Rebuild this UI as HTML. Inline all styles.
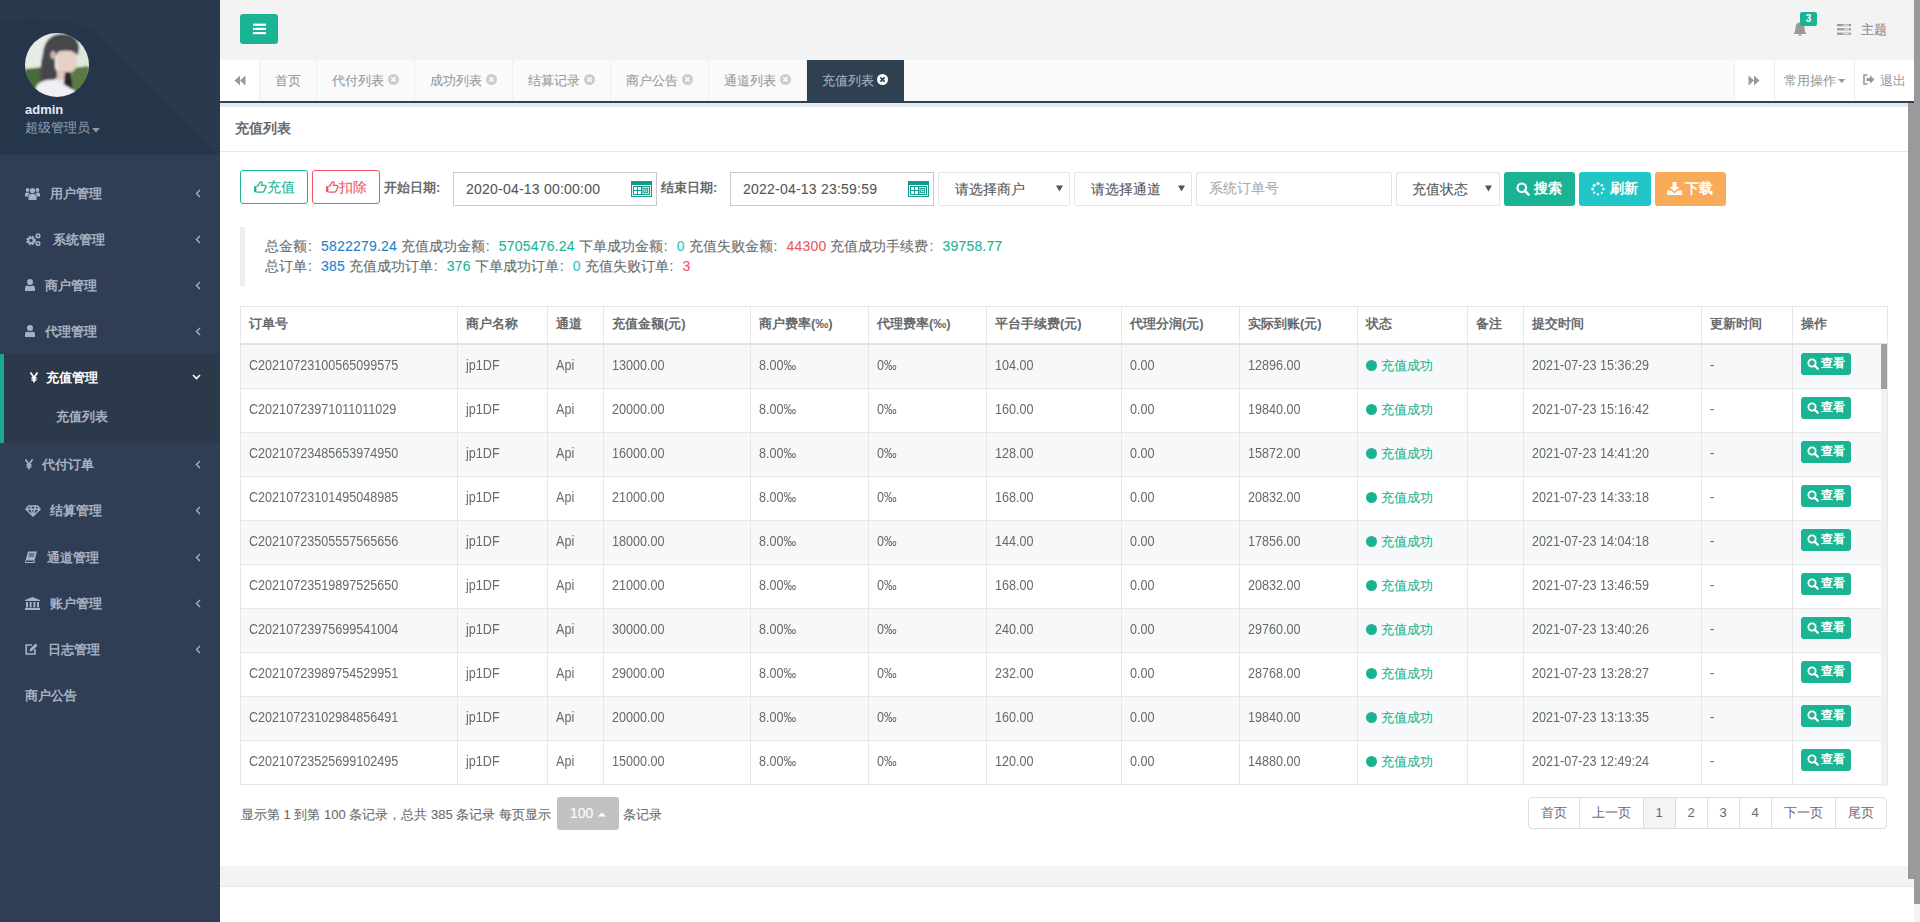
<!DOCTYPE html><html><head><meta charset="utf-8"><style>*{box-sizing:border-box}
html,body{margin:0;padding:0;width:1920px;height:922px;overflow:hidden;background:#f3f3f4;font-family:"Liberation Sans",sans-serif;color:#676a6c;font-size:13px}
.abs{position:absolute}
svg{display:block}
.t{position:absolute;white-space:nowrap;-webkit-text-stroke:0.08px currentColor}
.t[style*="bold"]{-webkit-text-stroke:0}
.num{display:inline-block;transform:scaleX(.9);transform-origin:0 0;-webkit-text-stroke:0}
</style></head><body>
<div class="abs" style="left:0;top:0;width:220px;height:922px;background:#303e55"></div>
<svg class="abs" style="left:0;top:0" width="220" height="155" viewBox="0 0 220 155"><rect width="220" height="155" fill="#2a3a4d"/><path d="M0 22 Q60 14 96 32 L220 158 L0 158Z" fill="#25354a"/></svg>
<svg class="abs" style="left:25px;top:33px" width="64" height="64" viewBox="0 0 64 64">
<defs><clipPath id="cc"><circle cx="32" cy="32" r="32"/></clipPath><filter id="bl" x="-10%" y="-10%" width="120%" height="120%"><feGaussianBlur stdDeviation="0.9"/></filter></defs>
<g clip-path="url(#cc)"><g filter="url(#bl)">
<rect x="-4" y="-4" width="72" height="72" fill="#e8ece6"/>
<path d="M0 36 L18 34 L18 56 L0 56Z" fill="#4a6a3a"/>
<path d="M46 34 L64 32 L64 60 L48 60Z" fill="#587a44"/>
<path d="M50 6 L64 10 L64 33 L48 35Z" fill="#dfe7dc"/>
<path d="M18 20 Q20 2 36 1 Q52 0 54 14 L53 22 L46 18 Q40 17 33 19 L30 24 L30 34 L34 44 L26 48 L16 50 Q14 36 18 20Z" fill="#47464c"/>
<path d="M33 19 Q42 16 50 20 L52 27 L51 35 Q48 40 42 40 L34 38 Q30 30 33 19Z" fill="#e6d0c5"/>
<ellipse cx="28" cy="22" rx="2.5" ry="4" fill="#cdb7ae"/>
<rect x="32" y="37" width="8" height="10" fill="#dfc8bd"/>
<path d="M40 39 L46 39 L48 56 L38 58Z" fill="#2b2729"/>
<path d="M8 66 L12 52 Q18 46 30 47 L40 52 L50 58 L52 66Z" fill="#eef0f3"/>
</g></g></svg>
<div class="t" style="left:25px;top:102px;color:#e6ebf2;font-weight:bold;font-size:13px;line-height:16px">admin</div>
<div class="t" style="left:25px;top:120px;color:#8a9bb0;font-size:13px;line-height:16px">超级管理员</div>
<svg class="abs" style="left:92px;top:128px" width="8" height="5"><path d="M0 0H8L4 4.5Z" fill="#8a9bb0"/></svg>
<div class="abs" style="left:0;top:354px;width:220px;height:89px;background:#2b394a;border-left:4px solid #19aa8d"></div>
<div class="abs" style="left:24.7px;top:186.9px"><svg width="15" height="13" viewBox="0 0 15 13"><circle cx="7.5" cy="3.6" r="2.6" fill="#a7b1c2"/><circle cx="2.6" cy="3" r="1.9" fill="#a7b1c2"/><circle cx="12.4" cy="3" r="1.9" fill="#a7b1c2"/><path d="M3.5 13 V9.5 Q3.5 6.8 7.5 6.8 Q11.5 6.8 11.5 9.5 V13Z" fill="#a7b1c2"/><path d="M0 9.5 V7 Q0 5.6 2.6 5.6 Q4 5.6 4.6 6.2 Q3 7.4 3 9.5Z" fill="#a7b1c2"/><path d="M15 9.5 V7 Q15 5.6 12.4 5.6 Q11 5.6 10.4 6.2 Q12 7.4 12 9.5Z" fill="#a7b1c2"/></svg></div>
<div class="t" style="left:49.5px;top:185.9px;line-height:16px;font-size:13px;font-weight:bold;color:#a7b1c2">用户管理</div>
<svg class="abs" style="left:195px;top:188.9px" width="6" height="9" viewBox="0 0 6 9"><path d="M5 1 L1.5 4.5 L5 8" stroke="#a7b1c2" stroke-width="1.4" fill="none"/></svg>
<div class="abs" style="left:26.0px;top:232.7px"><svg width="15" height="13" viewBox="0 0 15 13"><circle cx="5" cy="7.5" r="3.6" fill="none" stroke="#a7b1c2" stroke-width="2.4" stroke-dasharray="1.9 1"/><circle cx="5" cy="7.5" r="2.6" fill="none" stroke="#a7b1c2" stroke-width="1.8"/><circle cx="12" cy="2.8" r="1.8" fill="none" stroke="#a7b1c2" stroke-width="1.6"/><circle cx="12" cy="10.5" r="1.8" fill="none" stroke="#a7b1c2" stroke-width="1.6"/></svg></div>
<div class="t" style="left:52.5px;top:231.7px;line-height:16px;font-size:13px;font-weight:bold;color:#a7b1c2">系统管理</div>
<svg class="abs" style="left:195px;top:234.7px" width="6" height="9" viewBox="0 0 6 9"><path d="M5 1 L1.5 4.5 L5 8" stroke="#a7b1c2" stroke-width="1.4" fill="none"/></svg>
<div class="abs" style="left:25.0px;top:279.0px"><svg width="10" height="12" viewBox="0 0 10 12"><circle cx="5" cy="3" r="3" fill="#a7b1c2"/><path d="M0 12 V9.2 Q0 6.6 2.4 6.4 Q5 8 7.6 6.4 Q10 6.6 10 9.2 V12Z" fill="#a7b1c2"/></svg></div>
<div class="t" style="left:45.0px;top:277.5px;line-height:16px;font-size:13px;font-weight:bold;color:#a7b1c2">商户管理</div>
<svg class="abs" style="left:195px;top:280.5px" width="6" height="9" viewBox="0 0 6 9"><path d="M5 1 L1.5 4.5 L5 8" stroke="#a7b1c2" stroke-width="1.4" fill="none"/></svg>
<div class="abs" style="left:25.0px;top:325.0px"><svg width="10" height="12" viewBox="0 0 10 12"><circle cx="5" cy="3" r="3" fill="#a7b1c2"/><path d="M0 12 V9.2 Q0 6.6 2.4 6.4 Q5 8 7.6 6.4 Q10 6.6 10 9.2 V12Z" fill="#a7b1c2"/></svg></div>
<div class="t" style="left:45.0px;top:323.5px;line-height:16px;font-size:13px;font-weight:bold;color:#a7b1c2">代理管理</div>
<svg class="abs" style="left:195px;top:326.5px" width="6" height="9" viewBox="0 0 6 9"><path d="M5 1 L1.5 4.5 L5 8" stroke="#a7b1c2" stroke-width="1.4" fill="none"/></svg>
<div class="abs" style="left:29.5px;top:371.5px"><svg width="8" height="11" viewBox="0 0 8 11"><path d="M0.5 0.5 L4 5.5 L7.5 0.5 M4 5.5 V10.5 M1.5 5.8 H6.5 M1.5 8 H6.5" stroke="#fff" stroke-width="1.7" fill="none"/></svg></div>
<div class="t" style="left:46.0px;top:369.5px;line-height:16px;font-size:13px;font-weight:bold;color:#fff">充值管理</div>
<svg class="abs" style="left:192px;top:374.0px" width="9" height="6" viewBox="0 0 9 6"><path d="M1 1 L4.5 4.5 L8 1" stroke="#fff" stroke-width="1.6" fill="none"/></svg>
<div class="abs" style="left:25.0px;top:459.1px"><svg width="8" height="11" viewBox="0 0 8 11"><path d="M0.5 0.5 L4 5.5 L7.5 0.5 M4 5.5 V10.5 M1.5 5.8 H6.5 M1.5 8 H6.5" stroke="#a7b1c2" stroke-width="1.7" fill="none"/></svg></div>
<div class="t" style="left:42.0px;top:457.1px;line-height:16px;font-size:13px;font-weight:bold;color:#a7b1c2">代付订单</div>
<svg class="abs" style="left:195px;top:460.1px" width="6" height="9" viewBox="0 0 6 9"><path d="M5 1 L1.5 4.5 L5 8" stroke="#a7b1c2" stroke-width="1.4" fill="none"/></svg>
<div class="abs" style="left:24.6px;top:504.6px"><svg width="16" height="12" viewBox="0 0 16 12"><path d="M3.5 1 H12.5 L15 4.2 L8 11 L1 4.2Z M1 4.2 H15 M5.5 1 L6.2 4.2 L8 11 L9.8 4.2 L10.5 1" stroke="#a7b1c2" stroke-width="1.5" fill="none" stroke-linejoin="round"/></svg></div>
<div class="t" style="left:50.0px;top:503.1px;line-height:16px;font-size:13px;font-weight:bold;color:#a7b1c2">结算管理</div>
<svg class="abs" style="left:195px;top:506.1px" width="6" height="9" viewBox="0 0 6 9"><path d="M5 1 L1.5 4.5 L5 8" stroke="#a7b1c2" stroke-width="1.4" fill="none"/></svg>
<div class="abs" style="left:25.0px;top:551.0px"><svg width="12" height="12" viewBox="0 0 12 12"><path d="M3 0.5 H12 L9.5 9.5 H0.5Z" fill="#a7b1c2"/><path d="M0.5 9.5 L0 11.5 H9 L9.5 9.5" stroke="#a7b1c2" stroke-width="1.2" fill="none"/><path d="M4 3 H9.5 M3.5 5 H9" stroke="#303e55" stroke-width="1"/></svg></div>
<div class="t" style="left:46.5px;top:549.5px;line-height:16px;font-size:13px;font-weight:bold;color:#a7b1c2">通道管理</div>
<svg class="abs" style="left:195px;top:552.5px" width="6" height="9" viewBox="0 0 6 9"><path d="M5 1 L1.5 4.5 L5 8" stroke="#a7b1c2" stroke-width="1.4" fill="none"/></svg>
<div class="abs" style="left:24.6px;top:597.1px"><svg width="15" height="13" viewBox="0 0 15 13"><path d="M7.5 0 L15 3 V4 H0 V3Z" fill="#a7b1c2"/><rect x="1" y="5" width="2" height="5.5" fill="#a7b1c2"/><rect x="4.6" y="5" width="2" height="5.5" fill="#a7b1c2"/><rect x="8.4" y="5" width="2" height="5.5" fill="#a7b1c2"/><rect x="12" y="5" width="2" height="5.5" fill="#a7b1c2"/><rect x="0" y="11" width="15" height="2" fill="#a7b1c2"/></svg></div>
<div class="t" style="left:50.0px;top:596.1px;line-height:16px;font-size:13px;font-weight:bold;color:#a7b1c2">账户管理</div>
<svg class="abs" style="left:195px;top:599.1px" width="6" height="9" viewBox="0 0 6 9"><path d="M5 1 L1.5 4.5 L5 8" stroke="#a7b1c2" stroke-width="1.4" fill="none"/></svg>
<div class="abs" style="left:25.0px;top:643.0px"><svg width="13" height="12" viewBox="0 0 13 12"><path d="M7 2 H1.2 V11 H10 V6" stroke="#a7b1c2" stroke-width="1.6" fill="none"/><path d="M4.5 8.5 L5 6 L10.5 0.5 L12.5 2.5 L7 8Z" fill="#a7b1c2"/></svg></div>
<div class="t" style="left:48.0px;top:641.5px;line-height:16px;font-size:13px;font-weight:bold;color:#a7b1c2">日志管理</div>
<svg class="abs" style="left:195px;top:644.5px" width="6" height="9" viewBox="0 0 6 9"><path d="M5 1 L1.5 4.5 L5 8" stroke="#a7b1c2" stroke-width="1.4" fill="none"/></svg>
<div class="t" style="left:25.0px;top:687.5px;line-height:16px;font-size:13px;font-weight:bold;color:#a7b1c2">商户公告</div>
<div class="t" style="left:56px;top:409px;line-height:16px;font-size:13px;font-weight:bold;color:#a7b1c2">充值列表</div>
<div class="abs" style="left:220px;top:0;width:1694px;height:60px;background:#f3f3f4"></div>
<div class="abs" style="left:240px;top:14px;width:38px;height:30px;background:#1ab394;border-radius:3px"></div>
<svg class="abs" style="left:253px;top:23px" width="13" height="12" viewBox="0 0 13 12"><rect x="0" y="0.6" width="13" height="2.2" fill="#fff"/><rect x="0" y="4.8" width="13" height="2.2" fill="#fff"/><rect x="0" y="9" width="13" height="2.2" fill="#fff"/></svg>
<svg class="abs" style="left:1793px;top:22px" width="14" height="15" viewBox="0 0 14 15"><path d="M7 0.5 Q11.5 0.5 11.5 6 Q11.5 10 13.5 12 H0.5 Q2.5 10 2.5 6 Q2.5 0.5 7 0.5Z" fill="#999"/><path d="M5 12.5 Q7 15.5 9 12.5Z" fill="#999"/></svg>
<div class="abs" style="left:1800px;top:12px;width:17px;height:14px;background:#1ab394;border-radius:2px;color:#fff;font-size:10px;font-weight:bold;line-height:14px;text-align:center">3</div>
<svg class="abs" style="left:1837px;top:24px" width="14" height="11" viewBox="0 0 14 11"><rect x="0" y="0" width="14" height="2.2" fill="#999"/><rect x="0" y="4.2" width="14" height="2.2" fill="#999"/><rect x="0" y="8.6" width="14" height="2.2" fill="#999"/><rect x="6" y="0.6" width="6" height="1" fill="#f3f3f4"/><rect x="7" y="4.8" width="5" height="1" fill="#f3f3f4"/><rect x="6" y="9.2" width="6" height="1" fill="#f3f3f4"/></svg>
<div class="t" style="left:1861px;top:22px;font-size:13px;line-height:16px;color:#888">主题</div>
<div class="abs" style="left:220px;top:60px;width:1694px;height:43px;background:#fafafa;border-bottom:2px solid #2f4050"></div>
<div class="abs" style="left:220px;top:60px;width:40px;height:41px;background:#fff;border-right:1px solid #eee"></div>
<svg class="abs" style="left:234px;top:75px" width="12" height="11" viewBox="0 0 12 11"><path d="M6 0.5 L0.5 5.5 L6 10.5Z M11.5 0.5 L6 5.5 L11.5 10.5Z" fill="#999"/></svg>
<div class="abs" style="left:260px;top:60px;width:57px;height:41px;border-right:1px solid #eee;"></div>
<div class="t" style="left:275px;top:60px;line-height:41px;font-size:13px;color:#999">首页</div>
<div class="abs" style="left:317px;top:60px;width:98px;height:41px;border-right:1px solid #eee;"></div>
<div class="t" style="left:332px;top:60px;line-height:41px;font-size:13px;color:#999">代付列表</div>
<svg class="abs" style="left:388px;top:74px" width="11" height="11" viewBox="0 0 11 11"><circle cx="5.5" cy="5.5" r="5.5" fill="#ccc"/><path d="M3.4 3.4 L7.6 7.6 M7.6 3.4 L3.4 7.6" stroke="#fafafa" stroke-width="1.6"/></svg>
<div class="abs" style="left:415px;top:60px;width:98px;height:41px;border-right:1px solid #eee;"></div>
<div class="t" style="left:430px;top:60px;line-height:41px;font-size:13px;color:#999">成功列表</div>
<svg class="abs" style="left:486px;top:74px" width="11" height="11" viewBox="0 0 11 11"><circle cx="5.5" cy="5.5" r="5.5" fill="#ccc"/><path d="M3.4 3.4 L7.6 7.6 M7.6 3.4 L3.4 7.6" stroke="#fafafa" stroke-width="1.6"/></svg>
<div class="abs" style="left:513px;top:60px;width:98px;height:41px;border-right:1px solid #eee;"></div>
<div class="t" style="left:528px;top:60px;line-height:41px;font-size:13px;color:#999">结算记录</div>
<svg class="abs" style="left:584px;top:74px" width="11" height="11" viewBox="0 0 11 11"><circle cx="5.5" cy="5.5" r="5.5" fill="#ccc"/><path d="M3.4 3.4 L7.6 7.6 M7.6 3.4 L3.4 7.6" stroke="#fafafa" stroke-width="1.6"/></svg>
<div class="abs" style="left:611px;top:60px;width:98px;height:41px;border-right:1px solid #eee;"></div>
<div class="t" style="left:626px;top:60px;line-height:41px;font-size:13px;color:#999">商户公告</div>
<svg class="abs" style="left:682px;top:74px" width="11" height="11" viewBox="0 0 11 11"><circle cx="5.5" cy="5.5" r="5.5" fill="#ccc"/><path d="M3.4 3.4 L7.6 7.6 M7.6 3.4 L3.4 7.6" stroke="#fafafa" stroke-width="1.6"/></svg>
<div class="abs" style="left:709px;top:60px;width:98px;height:41px;border-right:1px solid #eee;"></div>
<div class="t" style="left:724px;top:60px;line-height:41px;font-size:13px;color:#999">通道列表</div>
<svg class="abs" style="left:780px;top:74px" width="11" height="11" viewBox="0 0 11 11"><circle cx="5.5" cy="5.5" r="5.5" fill="#ccc"/><path d="M3.4 3.4 L7.6 7.6 M7.6 3.4 L3.4 7.6" stroke="#fafafa" stroke-width="1.6"/></svg>
<div class="abs" style="left:807px;top:60px;width:97px;height:41px;border-right:1px solid #eee;background:#2f4050;border-right:none;"></div>
<div class="t" style="left:822px;top:60px;line-height:41px;font-size:13px;color:#a7b1c2">充值列表</div>
<svg class="abs" style="left:877px;top:74px" width="11" height="11" viewBox="0 0 11 11"><circle cx="5.5" cy="5.5" r="5.5" fill="#fff"/><path d="M3.4 3.4 L7.6 7.6 M7.6 3.4 L3.4 7.6" stroke="#2f4050" stroke-width="1.6"/></svg>
<div class="abs" style="left:1734px;top:60px;width:180px;height:41px;background:#fff;border-left:1px solid #eee"></div>
<div class="abs" style="left:1774px;top:60px;width:1px;height:41px;background:#eee"></div>
<div class="abs" style="left:1854px;top:60px;width:1px;height:41px;background:#eee"></div>
<svg class="abs" style="left:1748px;top:75px" width="12" height="11" viewBox="0 0 12 11"><path d="M0.5 0.5 L6 5.5 L0.5 10.5Z M6 0.5 L11.5 5.5 L6 10.5Z" fill="#999"/></svg>
<div class="t" style="left:1784px;top:60px;line-height:41px;font-size:13px;color:#999">常用操作</div>
<svg class="abs" style="left:1838px;top:79px" width="8" height="5"><path d="M0 0H7.5L3.75 4Z" fill="#999"/></svg>
<svg class="abs" style="left:1863px;top:74px" width="12" height="11" viewBox="0 0 12 11"><path d="M4.5 1 H1 V10 H4.5" stroke="#999" stroke-width="1.6" fill="none"/><path d="M3.5 4 H7 V1.2 L11.5 5.5 L7 9.8 V7 H3.5Z" fill="#999"/></svg>
<div class="t" style="left:1880px;top:60px;line-height:41px;font-size:13px;color:#999">退出</div>
<div class="abs" style="left:220px;top:103px;width:1688px;height:763px;background:#fff"></div>
<div class="abs" style="left:220px;top:103px;width:1688px;height:49px;border-top:4px solid #e7eaec;border-bottom:1px solid #e7eaec"></div>
<div class="t" style="left:235px;top:120px;font-size:14px;font-weight:bold;line-height:17px;color:#676a6c">充值列表</div>
<div class="abs" style="left:240px;top:170px;width:68px;height:34px;border:1px solid #1ab394;border-radius:3px;background:#fff"></div>
<div class="abs" style="left:253px;top:181px"><svg width="14" height="12" viewBox="0 0 14 12"><path d="M1 5.2 H3.4 V11.2 H1Z" fill="#1ab394"/><path d="M3.6 5.4 Q5.6 4.6 6.4 2.2 Q6.8 0.8 8 0.8 Q9.4 1 9 3 L8.6 4.4 H12 Q13.2 4.6 13 5.8 Q12.8 6.6 12 6.8 Q12.6 7.6 11.8 8.4 Q12 9.4 11 9.8 Q11 11 9.6 11.2 H5 Q4 11.2 3.6 10.6" stroke="#1ab394" stroke-width="1.3" fill="none" stroke-linejoin="round"/></svg></div>
<div class="t" style="left:267px;top:179px;font-size:14px;line-height:17px;color:#1ab394">充值</div>
<div class="abs" style="left:312px;top:170px;width:68px;height:34px;border:1px solid #ed5565;border-radius:3px;background:#fff"></div>
<div class="abs" style="left:325px;top:181px"><svg width="14" height="12" viewBox="0 0 14 12"><path d="M1 5.2 H3.4 V11.2 H1Z" fill="#ed5565"/><path d="M3.6 5.4 Q5.6 4.6 6.4 2.2 Q6.8 0.8 8 0.8 Q9.4 1 9 3 L8.6 4.4 H12 Q13.2 4.6 13 5.8 Q12.8 6.6 12 6.8 Q12.6 7.6 11.8 8.4 Q12 9.4 11 9.8 Q11 11 9.6 11.2 H5 Q4 11.2 3.6 10.6" stroke="#ed5565" stroke-width="1.3" fill="none" stroke-linejoin="round"/></svg></div>
<div class="t" style="left:339px;top:179px;font-size:14px;line-height:17px;color:#ed5565">扣除</div>
<div class="t" style="left:384px;top:179px;font-size:13px;font-weight:bold;line-height:17px;color:#676a6c">开始日期:</div>
<div class="t" style="left:661px;top:179px;font-size:13px;font-weight:bold;line-height:17px;color:#676a6c">结束日期:</div>
<div class="abs" style="left:453px;top:172px;width:204px;height:34px;border:1px solid #cbcbcb;background:#fff"></div>
<div class="t" style="left:466px;top:181px;font-size:14px;line-height:17px;color:#555;letter-spacing:.22px">2020-04-13 00:00:00</div>
<div class="abs" style="left:631px;top:181px"><svg width="21" height="16" viewBox="0 0 21 16"><rect x="0" y="0" width="21" height="16" fill="#15998b"/><rect x="1.5" y="4.5" width="18" height="10" fill="none" stroke="#e9fbf8" stroke-width="1"/><rect x="3" y="6" width="3" height="3" fill="#fff"/><rect x="7" y="6" width="3" height="3" fill="#fff"/><rect x="3" y="10" width="3" height="3" fill="#fff"/><rect x="7" y="10" width="3" height="3" fill="#fff"/><rect x="11.5" y="6" width="6.5" height="7" fill="#fff"/><rect x="12.8" y="7.3" width="3.9" height="4.4" fill="none" stroke="#15998b" stroke-width="1.1"/><rect x="14" y="8.5" width="1.5" height="2" fill="#15998b"/></svg></div>
<div class="abs" style="left:730px;top:172px;width:204px;height:34px;border:1px solid #cbcbcb;background:#fff"></div>
<div class="t" style="left:743px;top:181px;font-size:14px;line-height:17px;color:#555;letter-spacing:.22px">2022-04-13 23:59:59</div>
<div class="abs" style="left:908px;top:181px"><svg width="21" height="16" viewBox="0 0 21 16"><rect x="0" y="0" width="21" height="16" fill="#15998b"/><rect x="1.5" y="4.5" width="18" height="10" fill="none" stroke="#e9fbf8" stroke-width="1"/><rect x="3" y="6" width="3" height="3" fill="#fff"/><rect x="7" y="6" width="3" height="3" fill="#fff"/><rect x="3" y="10" width="3" height="3" fill="#fff"/><rect x="7" y="10" width="3" height="3" fill="#fff"/><rect x="11.5" y="6" width="6.5" height="7" fill="#fff"/><rect x="12.8" y="7.3" width="3.9" height="4.4" fill="none" stroke="#15998b" stroke-width="1.1"/><rect x="14" y="8.5" width="1.5" height="2" fill="#15998b"/></svg></div>
<div class="abs" style="left:938px;top:172px;width:132px;height:34px;border:1px solid #e2e3e4;border-radius:2px;background:#fff"></div>
<div class="t" style="left:955px;top:181px;font-size:14px;line-height:17px;color:#555">请选择商户</div>
<div class="abs" style="left:1056px;top:185px"><svg width="7" height="7" viewBox="0 0 7 7"><path d="M0 0.5 H7 L3.5 6.5Z" fill="#555"/></svg></div>
<div class="abs" style="left:1074px;top:172px;width:118px;height:34px;border:1px solid #e2e3e4;border-radius:2px;background:#fff"></div>
<div class="t" style="left:1091px;top:181px;font-size:14px;line-height:17px;color:#555">请选择通道</div>
<div class="abs" style="left:1178px;top:185px"><svg width="7" height="7" viewBox="0 0 7 7"><path d="M0 0.5 H7 L3.5 6.5Z" fill="#555"/></svg></div>
<div class="abs" style="left:1196px;top:172px;width:196px;height:34px;border:1px solid #e2e3e4;border-radius:2px;background:#fff"></div>
<div class="t" style="left:1209px;top:180px;font-size:14px;line-height:17px;color:#aaa">系统订单号</div>
<div class="abs" style="left:1396px;top:172px;width:104px;height:34px;border:1px solid #e2e3e4;border-radius:2px;background:#fff"></div>
<div class="t" style="left:1412px;top:181px;font-size:14px;line-height:17px;color:#555">充值状态</div>
<div class="abs" style="left:1485px;top:185px"><svg width="7" height="7" viewBox="0 0 7 7"><path d="M0 0.5 H7 L3.5 6.5Z" fill="#555"/></svg></div>
<div class="abs" style="left:1504px;top:172px;width:71px;height:34px;background:#1ab394;border-radius:3px"></div>
<div class="abs" style="left:1516px;top:182px"><svg width="14" height="14" viewBox="0 0 14 14"><circle cx="5.8" cy="5.8" r="4.3" stroke="#fff" stroke-width="2.2" fill="none"/><path d="M8.8 8.8 L12.6 12.6" stroke="#fff" stroke-width="2.6" stroke-linecap="round"/></svg></div>
<div class="t" style="left:1534px;top:180px;line-height:17px;color:#fff;font-weight:bold;font-size:14px">搜索</div>
<div class="abs" style="left:1579px;top:172px;width:72px;height:34px;background:#23c6c8;border-radius:3px"></div>
<div class="abs" style="left:1591px;top:182px"><svg width="14" height="14" viewBox="0 0 14 14" fill="#fff"><circle cx="7" cy="1.6" r="1.5"/><circle cx="10.8" cy="3.2" r="1.3"/><circle cx="12.4" cy="7" r="1.2"/><circle cx="10.8" cy="10.8" r="1.1"/><circle cx="7" cy="12.4" r="1.1"/><circle cx="3.2" cy="10.8" r="1.2"/><circle cx="1.6" cy="7" r="1.4"/><circle cx="3.2" cy="3.2" r="1.5"/></svg></div>
<div class="t" style="left:1610px;top:180px;line-height:17px;color:#fff;font-weight:bold;font-size:14px">刷新</div>
<div class="abs" style="left:1655px;top:172px;width:71px;height:34px;background:#f8ac59;border-radius:3px"></div>
<div class="abs" style="left:1667px;top:182px"><svg width="15" height="13" viewBox="0 0 15 13" fill="#fff"><path d="M5.5 0 H9.5 V5 H12.5 L7.5 9.5 L2.5 5 H5.5Z"/><path d="M0 8.5 H4 L7.5 11.5 L11 8.5 H15 V13 H0Z"/></svg></div>
<div class="t" style="left:1685px;top:180px;line-height:17px;color:#fff;font-weight:bold;font-size:14px">下载</div>
<div class="abs" style="left:240px;top:227px;width:5px;height:59px;background:#eee"></div>
<div class="t" style="left:265px;top:236px;font-size:14px;line-height:20px;color:#676a6c">总金额<span style="display:inline-block;width:14px;padding-left:1px">:</span><span style="color:#1c84c6;letter-spacing:.2px">5822279.24</span> 充值成功金额<span style="display:inline-block;width:14px;padding-left:1px">:</span><span style="color:#1ab394;letter-spacing:.2px">5705476.24</span> 下单成功金额<span style="display:inline-block;width:14px;padding-left:1px">:</span><span style="color:#23c6c8;letter-spacing:.2px">0</span> 充值失败金额<span style="display:inline-block;width:14px;padding-left:1px">:</span><span style="color:#ed5565;letter-spacing:.2px">44300</span> 充值成功手续费<span style="display:inline-block;width:14px;padding-left:1px">:</span><span style="color:#1ab394;letter-spacing:.2px">39758.77</span><br>总订单<span style="display:inline-block;width:14px;padding-left:1px">:</span><span style="color:#1c84c6;letter-spacing:.2px">385</span> 充值成功订单<span style="display:inline-block;width:14px;padding-left:1px">:</span><span style="color:#1ab394;letter-spacing:.2px">376</span> 下单成功订单<span style="display:inline-block;width:14px;padding-left:1px">:</span><span style="color:#23c6c8;letter-spacing:.2px">0</span> 充值失败订单<span style="display:inline-block;width:14px;padding-left:1px">:</span><span style="color:#ed5565;letter-spacing:.2px">3</span></div>
<div class="abs" style="left:240px;top:345px;width:1641px;height:44px;background:#f7f8f9;border-bottom:1px solid #e7e7e9"></div>
<div class="abs" style="left:240px;top:389px;width:1641px;height:44px;background:#fff;border-bottom:1px solid #e7e7e9"></div>
<div class="abs" style="left:240px;top:433px;width:1641px;height:44px;background:#f7f8f9;border-bottom:1px solid #e7e7e9"></div>
<div class="abs" style="left:240px;top:477px;width:1641px;height:44px;background:#fff;border-bottom:1px solid #e7e7e9"></div>
<div class="abs" style="left:240px;top:521px;width:1641px;height:44px;background:#f7f8f9;border-bottom:1px solid #e7e7e9"></div>
<div class="abs" style="left:240px;top:565px;width:1641px;height:44px;background:#fff;border-bottom:1px solid #e7e7e9"></div>
<div class="abs" style="left:240px;top:609px;width:1641px;height:44px;background:#f7f8f9;border-bottom:1px solid #e7e7e9"></div>
<div class="abs" style="left:240px;top:653px;width:1641px;height:44px;background:#fff;border-bottom:1px solid #e7e7e9"></div>
<div class="abs" style="left:240px;top:697px;width:1641px;height:44px;background:#f7f8f9;border-bottom:1px solid #e7e7e9"></div>
<div class="abs" style="left:240px;top:741px;width:1641px;height:44px;background:#fff;border-bottom:1px solid #e7e7e9"></div>
<div class="abs" style="left:240px;top:306px;width:1648px;height:39px;background:#fff;border:1px solid #e7e7e9;border-bottom:2px solid #e3e3e5"></div>
<div class="t" style="left:249px;top:316px;font-size:13px;font-weight:bold;line-height:16px;color:#676a6c">订单号</div>
<div class="t" style="left:466px;top:316px;font-size:13px;font-weight:bold;line-height:16px;color:#676a6c">商户名称</div>
<div class="t" style="left:556px;top:316px;font-size:13px;font-weight:bold;line-height:16px;color:#676a6c">通道</div>
<div class="t" style="left:612px;top:316px;font-size:13px;font-weight:bold;line-height:16px;color:#676a6c">充值金额(元)</div>
<div class="t" style="left:759px;top:316px;font-size:13px;font-weight:bold;line-height:16px;color:#676a6c">商户费率(‰)</div>
<div class="t" style="left:877px;top:316px;font-size:13px;font-weight:bold;line-height:16px;color:#676a6c">代理费率(‰)</div>
<div class="t" style="left:995px;top:316px;font-size:13px;font-weight:bold;line-height:16px;color:#676a6c">平台手续费(元)</div>
<div class="t" style="left:1130px;top:316px;font-size:13px;font-weight:bold;line-height:16px;color:#676a6c">代理分润(元)</div>
<div class="t" style="left:1248px;top:316px;font-size:13px;font-weight:bold;line-height:16px;color:#676a6c">实际到账(元)</div>
<div class="t" style="left:1366px;top:316px;font-size:13px;font-weight:bold;line-height:16px;color:#676a6c">状态</div>
<div class="t" style="left:1476px;top:316px;font-size:13px;font-weight:bold;line-height:16px;color:#676a6c">备注</div>
<div class="t" style="left:1532px;top:316px;font-size:13px;font-weight:bold;line-height:16px;color:#676a6c">提交时间</div>
<div class="t" style="left:1710px;top:316px;font-size:13px;font-weight:bold;line-height:16px;color:#676a6c">更新时间</div>
<div class="t" style="left:1801px;top:316px;font-size:13px;font-weight:bold;line-height:16px;color:#676a6c">操作</div>
<div class="abs" style="left:240px;top:306px;width:1px;height:480px;background:#e7e7e9"></div>
<div class="abs" style="left:457px;top:306px;width:1px;height:480px;background:#e7e7e9"></div>
<div class="abs" style="left:547px;top:306px;width:1px;height:480px;background:#e7e7e9"></div>
<div class="abs" style="left:603px;top:306px;width:1px;height:480px;background:#e7e7e9"></div>
<div class="abs" style="left:750px;top:306px;width:1px;height:480px;background:#e7e7e9"></div>
<div class="abs" style="left:868px;top:306px;width:1px;height:480px;background:#e7e7e9"></div>
<div class="abs" style="left:986px;top:306px;width:1px;height:480px;background:#e7e7e9"></div>
<div class="abs" style="left:1121px;top:306px;width:1px;height:480px;background:#e7e7e9"></div>
<div class="abs" style="left:1239px;top:306px;width:1px;height:480px;background:#e7e7e9"></div>
<div class="abs" style="left:1357px;top:306px;width:1px;height:480px;background:#e7e7e9"></div>
<div class="abs" style="left:1467px;top:306px;width:1px;height:480px;background:#e7e7e9"></div>
<div class="abs" style="left:1523px;top:306px;width:1px;height:480px;background:#e7e7e9"></div>
<div class="abs" style="left:1701px;top:306px;width:1px;height:480px;background:#e7e7e9"></div>
<div class="abs" style="left:1792px;top:306px;width:1px;height:480px;background:#e7e7e9"></div>
<div class="abs" style="left:1887px;top:306px;width:1px;height:480px;background:#e7e7e9"></div>
<div class="abs" style="left:1881px;top:345px;width:6px;height:441px;background:#f1f1f1"></div>
<div class="abs" style="left:1881px;top:344px;width:6px;height:45px;background:#a0a0a0"></div>
<div class="t" style="left:249px;top:357px;line-height:16px;font-size:14px;color:#676a6c"><span class="num">C20210723100565099575</span></div>
<div class="t" style="left:466px;top:357px;line-height:16px;font-size:14px;color:#676a6c"><span class="num">jp1DF</span></div>
<div class="t" style="left:556px;top:357px;line-height:16px;font-size:14px;color:#676a6c"><span class="num">Api</span></div>
<div class="t" style="left:612px;top:357px;line-height:16px;font-size:14px;color:#676a6c"><span class="num">13000.00</span></div>
<div class="t" style="left:759px;top:357px;line-height:16px;font-size:14px;color:#676a6c"><span class="num">8.00‰</span></div>
<div class="t" style="left:877px;top:357px;line-height:16px;font-size:14px;color:#676a6c"><span class="num">0‰</span></div>
<div class="t" style="left:995px;top:357px;line-height:16px;font-size:14px;color:#676a6c"><span class="num">104.00</span></div>
<div class="t" style="left:1130px;top:357px;line-height:16px;font-size:14px;color:#676a6c"><span class="num">0.00</span></div>
<div class="t" style="left:1248px;top:357px;line-height:16px;font-size:14px;color:#676a6c"><span class="num">12896.00</span></div>
<div class="t" style="left:1366px;top:358px;line-height:16px;font-size:13px;color:#1ab394"><span style="display:inline-block;width:11px;height:11px;border-radius:50%;background:#1ab394;margin-right:4px;vertical-align:-1px"></span>充值成功</div>
<div class="t" style="left:1532px;top:357px;line-height:16px;font-size:14px;color:#676a6c"><span class="num">2021-07-23 15:36:29</span></div>
<div class="t" style="left:1710px;top:357px;line-height:16px;font-size:14px;color:#676a6c"><span class="num">-</span></div>
<div class="abs" style="left:1801px;top:353px;width:50px;height:22px;background:#1ab394;border-radius:3px"></div>
<svg class="abs" style="left:1807px;top:358px" width="12" height="12" viewBox="0 0 12 12"><circle cx="5" cy="5" r="3.6" stroke="#fff" stroke-width="1.9" fill="none"/><path d="M7.6 7.6 L10.8 10.8" stroke="#fff" stroke-width="2.2" stroke-linecap="round"/></svg>
<div class="t" style="left:1821px;top:356px;font-size:12px;line-height:15px;color:#fff;font-weight:bold">查看</div>
<div class="t" style="left:249px;top:401px;line-height:16px;font-size:14px;color:#676a6c"><span class="num">C20210723971011011029</span></div>
<div class="t" style="left:466px;top:401px;line-height:16px;font-size:14px;color:#676a6c"><span class="num">jp1DF</span></div>
<div class="t" style="left:556px;top:401px;line-height:16px;font-size:14px;color:#676a6c"><span class="num">Api</span></div>
<div class="t" style="left:612px;top:401px;line-height:16px;font-size:14px;color:#676a6c"><span class="num">20000.00</span></div>
<div class="t" style="left:759px;top:401px;line-height:16px;font-size:14px;color:#676a6c"><span class="num">8.00‰</span></div>
<div class="t" style="left:877px;top:401px;line-height:16px;font-size:14px;color:#676a6c"><span class="num">0‰</span></div>
<div class="t" style="left:995px;top:401px;line-height:16px;font-size:14px;color:#676a6c"><span class="num">160.00</span></div>
<div class="t" style="left:1130px;top:401px;line-height:16px;font-size:14px;color:#676a6c"><span class="num">0.00</span></div>
<div class="t" style="left:1248px;top:401px;line-height:16px;font-size:14px;color:#676a6c"><span class="num">19840.00</span></div>
<div class="t" style="left:1366px;top:402px;line-height:16px;font-size:13px;color:#1ab394"><span style="display:inline-block;width:11px;height:11px;border-radius:50%;background:#1ab394;margin-right:4px;vertical-align:-1px"></span>充值成功</div>
<div class="t" style="left:1532px;top:401px;line-height:16px;font-size:14px;color:#676a6c"><span class="num">2021-07-23 15:16:42</span></div>
<div class="t" style="left:1710px;top:401px;line-height:16px;font-size:14px;color:#676a6c"><span class="num">-</span></div>
<div class="abs" style="left:1801px;top:397px;width:50px;height:22px;background:#1ab394;border-radius:3px"></div>
<svg class="abs" style="left:1807px;top:402px" width="12" height="12" viewBox="0 0 12 12"><circle cx="5" cy="5" r="3.6" stroke="#fff" stroke-width="1.9" fill="none"/><path d="M7.6 7.6 L10.8 10.8" stroke="#fff" stroke-width="2.2" stroke-linecap="round"/></svg>
<div class="t" style="left:1821px;top:400px;font-size:12px;line-height:15px;color:#fff;font-weight:bold">查看</div>
<div class="t" style="left:249px;top:445px;line-height:16px;font-size:14px;color:#676a6c"><span class="num">C20210723485653974950</span></div>
<div class="t" style="left:466px;top:445px;line-height:16px;font-size:14px;color:#676a6c"><span class="num">jp1DF</span></div>
<div class="t" style="left:556px;top:445px;line-height:16px;font-size:14px;color:#676a6c"><span class="num">Api</span></div>
<div class="t" style="left:612px;top:445px;line-height:16px;font-size:14px;color:#676a6c"><span class="num">16000.00</span></div>
<div class="t" style="left:759px;top:445px;line-height:16px;font-size:14px;color:#676a6c"><span class="num">8.00‰</span></div>
<div class="t" style="left:877px;top:445px;line-height:16px;font-size:14px;color:#676a6c"><span class="num">0‰</span></div>
<div class="t" style="left:995px;top:445px;line-height:16px;font-size:14px;color:#676a6c"><span class="num">128.00</span></div>
<div class="t" style="left:1130px;top:445px;line-height:16px;font-size:14px;color:#676a6c"><span class="num">0.00</span></div>
<div class="t" style="left:1248px;top:445px;line-height:16px;font-size:14px;color:#676a6c"><span class="num">15872.00</span></div>
<div class="t" style="left:1366px;top:446px;line-height:16px;font-size:13px;color:#1ab394"><span style="display:inline-block;width:11px;height:11px;border-radius:50%;background:#1ab394;margin-right:4px;vertical-align:-1px"></span>充值成功</div>
<div class="t" style="left:1532px;top:445px;line-height:16px;font-size:14px;color:#676a6c"><span class="num">2021-07-23 14:41:20</span></div>
<div class="t" style="left:1710px;top:445px;line-height:16px;font-size:14px;color:#676a6c"><span class="num">-</span></div>
<div class="abs" style="left:1801px;top:441px;width:50px;height:22px;background:#1ab394;border-radius:3px"></div>
<svg class="abs" style="left:1807px;top:446px" width="12" height="12" viewBox="0 0 12 12"><circle cx="5" cy="5" r="3.6" stroke="#fff" stroke-width="1.9" fill="none"/><path d="M7.6 7.6 L10.8 10.8" stroke="#fff" stroke-width="2.2" stroke-linecap="round"/></svg>
<div class="t" style="left:1821px;top:444px;font-size:12px;line-height:15px;color:#fff;font-weight:bold">查看</div>
<div class="t" style="left:249px;top:489px;line-height:16px;font-size:14px;color:#676a6c"><span class="num">C20210723101495048985</span></div>
<div class="t" style="left:466px;top:489px;line-height:16px;font-size:14px;color:#676a6c"><span class="num">jp1DF</span></div>
<div class="t" style="left:556px;top:489px;line-height:16px;font-size:14px;color:#676a6c"><span class="num">Api</span></div>
<div class="t" style="left:612px;top:489px;line-height:16px;font-size:14px;color:#676a6c"><span class="num">21000.00</span></div>
<div class="t" style="left:759px;top:489px;line-height:16px;font-size:14px;color:#676a6c"><span class="num">8.00‰</span></div>
<div class="t" style="left:877px;top:489px;line-height:16px;font-size:14px;color:#676a6c"><span class="num">0‰</span></div>
<div class="t" style="left:995px;top:489px;line-height:16px;font-size:14px;color:#676a6c"><span class="num">168.00</span></div>
<div class="t" style="left:1130px;top:489px;line-height:16px;font-size:14px;color:#676a6c"><span class="num">0.00</span></div>
<div class="t" style="left:1248px;top:489px;line-height:16px;font-size:14px;color:#676a6c"><span class="num">20832.00</span></div>
<div class="t" style="left:1366px;top:490px;line-height:16px;font-size:13px;color:#1ab394"><span style="display:inline-block;width:11px;height:11px;border-radius:50%;background:#1ab394;margin-right:4px;vertical-align:-1px"></span>充值成功</div>
<div class="t" style="left:1532px;top:489px;line-height:16px;font-size:14px;color:#676a6c"><span class="num">2021-07-23 14:33:18</span></div>
<div class="t" style="left:1710px;top:489px;line-height:16px;font-size:14px;color:#676a6c"><span class="num">-</span></div>
<div class="abs" style="left:1801px;top:485px;width:50px;height:22px;background:#1ab394;border-radius:3px"></div>
<svg class="abs" style="left:1807px;top:490px" width="12" height="12" viewBox="0 0 12 12"><circle cx="5" cy="5" r="3.6" stroke="#fff" stroke-width="1.9" fill="none"/><path d="M7.6 7.6 L10.8 10.8" stroke="#fff" stroke-width="2.2" stroke-linecap="round"/></svg>
<div class="t" style="left:1821px;top:488px;font-size:12px;line-height:15px;color:#fff;font-weight:bold">查看</div>
<div class="t" style="left:249px;top:533px;line-height:16px;font-size:14px;color:#676a6c"><span class="num">C20210723505557565656</span></div>
<div class="t" style="left:466px;top:533px;line-height:16px;font-size:14px;color:#676a6c"><span class="num">jp1DF</span></div>
<div class="t" style="left:556px;top:533px;line-height:16px;font-size:14px;color:#676a6c"><span class="num">Api</span></div>
<div class="t" style="left:612px;top:533px;line-height:16px;font-size:14px;color:#676a6c"><span class="num">18000.00</span></div>
<div class="t" style="left:759px;top:533px;line-height:16px;font-size:14px;color:#676a6c"><span class="num">8.00‰</span></div>
<div class="t" style="left:877px;top:533px;line-height:16px;font-size:14px;color:#676a6c"><span class="num">0‰</span></div>
<div class="t" style="left:995px;top:533px;line-height:16px;font-size:14px;color:#676a6c"><span class="num">144.00</span></div>
<div class="t" style="left:1130px;top:533px;line-height:16px;font-size:14px;color:#676a6c"><span class="num">0.00</span></div>
<div class="t" style="left:1248px;top:533px;line-height:16px;font-size:14px;color:#676a6c"><span class="num">17856.00</span></div>
<div class="t" style="left:1366px;top:534px;line-height:16px;font-size:13px;color:#1ab394"><span style="display:inline-block;width:11px;height:11px;border-radius:50%;background:#1ab394;margin-right:4px;vertical-align:-1px"></span>充值成功</div>
<div class="t" style="left:1532px;top:533px;line-height:16px;font-size:14px;color:#676a6c"><span class="num">2021-07-23 14:04:18</span></div>
<div class="t" style="left:1710px;top:533px;line-height:16px;font-size:14px;color:#676a6c"><span class="num">-</span></div>
<div class="abs" style="left:1801px;top:529px;width:50px;height:22px;background:#1ab394;border-radius:3px"></div>
<svg class="abs" style="left:1807px;top:534px" width="12" height="12" viewBox="0 0 12 12"><circle cx="5" cy="5" r="3.6" stroke="#fff" stroke-width="1.9" fill="none"/><path d="M7.6 7.6 L10.8 10.8" stroke="#fff" stroke-width="2.2" stroke-linecap="round"/></svg>
<div class="t" style="left:1821px;top:532px;font-size:12px;line-height:15px;color:#fff;font-weight:bold">查看</div>
<div class="t" style="left:249px;top:577px;line-height:16px;font-size:14px;color:#676a6c"><span class="num">C20210723519897525650</span></div>
<div class="t" style="left:466px;top:577px;line-height:16px;font-size:14px;color:#676a6c"><span class="num">jp1DF</span></div>
<div class="t" style="left:556px;top:577px;line-height:16px;font-size:14px;color:#676a6c"><span class="num">Api</span></div>
<div class="t" style="left:612px;top:577px;line-height:16px;font-size:14px;color:#676a6c"><span class="num">21000.00</span></div>
<div class="t" style="left:759px;top:577px;line-height:16px;font-size:14px;color:#676a6c"><span class="num">8.00‰</span></div>
<div class="t" style="left:877px;top:577px;line-height:16px;font-size:14px;color:#676a6c"><span class="num">0‰</span></div>
<div class="t" style="left:995px;top:577px;line-height:16px;font-size:14px;color:#676a6c"><span class="num">168.00</span></div>
<div class="t" style="left:1130px;top:577px;line-height:16px;font-size:14px;color:#676a6c"><span class="num">0.00</span></div>
<div class="t" style="left:1248px;top:577px;line-height:16px;font-size:14px;color:#676a6c"><span class="num">20832.00</span></div>
<div class="t" style="left:1366px;top:578px;line-height:16px;font-size:13px;color:#1ab394"><span style="display:inline-block;width:11px;height:11px;border-radius:50%;background:#1ab394;margin-right:4px;vertical-align:-1px"></span>充值成功</div>
<div class="t" style="left:1532px;top:577px;line-height:16px;font-size:14px;color:#676a6c"><span class="num">2021-07-23 13:46:59</span></div>
<div class="t" style="left:1710px;top:577px;line-height:16px;font-size:14px;color:#676a6c"><span class="num">-</span></div>
<div class="abs" style="left:1801px;top:573px;width:50px;height:22px;background:#1ab394;border-radius:3px"></div>
<svg class="abs" style="left:1807px;top:578px" width="12" height="12" viewBox="0 0 12 12"><circle cx="5" cy="5" r="3.6" stroke="#fff" stroke-width="1.9" fill="none"/><path d="M7.6 7.6 L10.8 10.8" stroke="#fff" stroke-width="2.2" stroke-linecap="round"/></svg>
<div class="t" style="left:1821px;top:576px;font-size:12px;line-height:15px;color:#fff;font-weight:bold">查看</div>
<div class="t" style="left:249px;top:621px;line-height:16px;font-size:14px;color:#676a6c"><span class="num">C20210723975699541004</span></div>
<div class="t" style="left:466px;top:621px;line-height:16px;font-size:14px;color:#676a6c"><span class="num">jp1DF</span></div>
<div class="t" style="left:556px;top:621px;line-height:16px;font-size:14px;color:#676a6c"><span class="num">Api</span></div>
<div class="t" style="left:612px;top:621px;line-height:16px;font-size:14px;color:#676a6c"><span class="num">30000.00</span></div>
<div class="t" style="left:759px;top:621px;line-height:16px;font-size:14px;color:#676a6c"><span class="num">8.00‰</span></div>
<div class="t" style="left:877px;top:621px;line-height:16px;font-size:14px;color:#676a6c"><span class="num">0‰</span></div>
<div class="t" style="left:995px;top:621px;line-height:16px;font-size:14px;color:#676a6c"><span class="num">240.00</span></div>
<div class="t" style="left:1130px;top:621px;line-height:16px;font-size:14px;color:#676a6c"><span class="num">0.00</span></div>
<div class="t" style="left:1248px;top:621px;line-height:16px;font-size:14px;color:#676a6c"><span class="num">29760.00</span></div>
<div class="t" style="left:1366px;top:622px;line-height:16px;font-size:13px;color:#1ab394"><span style="display:inline-block;width:11px;height:11px;border-radius:50%;background:#1ab394;margin-right:4px;vertical-align:-1px"></span>充值成功</div>
<div class="t" style="left:1532px;top:621px;line-height:16px;font-size:14px;color:#676a6c"><span class="num">2021-07-23 13:40:26</span></div>
<div class="t" style="left:1710px;top:621px;line-height:16px;font-size:14px;color:#676a6c"><span class="num">-</span></div>
<div class="abs" style="left:1801px;top:617px;width:50px;height:22px;background:#1ab394;border-radius:3px"></div>
<svg class="abs" style="left:1807px;top:622px" width="12" height="12" viewBox="0 0 12 12"><circle cx="5" cy="5" r="3.6" stroke="#fff" stroke-width="1.9" fill="none"/><path d="M7.6 7.6 L10.8 10.8" stroke="#fff" stroke-width="2.2" stroke-linecap="round"/></svg>
<div class="t" style="left:1821px;top:620px;font-size:12px;line-height:15px;color:#fff;font-weight:bold">查看</div>
<div class="t" style="left:249px;top:665px;line-height:16px;font-size:14px;color:#676a6c"><span class="num">C20210723989754529951</span></div>
<div class="t" style="left:466px;top:665px;line-height:16px;font-size:14px;color:#676a6c"><span class="num">jp1DF</span></div>
<div class="t" style="left:556px;top:665px;line-height:16px;font-size:14px;color:#676a6c"><span class="num">Api</span></div>
<div class="t" style="left:612px;top:665px;line-height:16px;font-size:14px;color:#676a6c"><span class="num">29000.00</span></div>
<div class="t" style="left:759px;top:665px;line-height:16px;font-size:14px;color:#676a6c"><span class="num">8.00‰</span></div>
<div class="t" style="left:877px;top:665px;line-height:16px;font-size:14px;color:#676a6c"><span class="num">0‰</span></div>
<div class="t" style="left:995px;top:665px;line-height:16px;font-size:14px;color:#676a6c"><span class="num">232.00</span></div>
<div class="t" style="left:1130px;top:665px;line-height:16px;font-size:14px;color:#676a6c"><span class="num">0.00</span></div>
<div class="t" style="left:1248px;top:665px;line-height:16px;font-size:14px;color:#676a6c"><span class="num">28768.00</span></div>
<div class="t" style="left:1366px;top:666px;line-height:16px;font-size:13px;color:#1ab394"><span style="display:inline-block;width:11px;height:11px;border-radius:50%;background:#1ab394;margin-right:4px;vertical-align:-1px"></span>充值成功</div>
<div class="t" style="left:1532px;top:665px;line-height:16px;font-size:14px;color:#676a6c"><span class="num">2021-07-23 13:28:27</span></div>
<div class="t" style="left:1710px;top:665px;line-height:16px;font-size:14px;color:#676a6c"><span class="num">-</span></div>
<div class="abs" style="left:1801px;top:661px;width:50px;height:22px;background:#1ab394;border-radius:3px"></div>
<svg class="abs" style="left:1807px;top:666px" width="12" height="12" viewBox="0 0 12 12"><circle cx="5" cy="5" r="3.6" stroke="#fff" stroke-width="1.9" fill="none"/><path d="M7.6 7.6 L10.8 10.8" stroke="#fff" stroke-width="2.2" stroke-linecap="round"/></svg>
<div class="t" style="left:1821px;top:664px;font-size:12px;line-height:15px;color:#fff;font-weight:bold">查看</div>
<div class="t" style="left:249px;top:709px;line-height:16px;font-size:14px;color:#676a6c"><span class="num">C20210723102984856491</span></div>
<div class="t" style="left:466px;top:709px;line-height:16px;font-size:14px;color:#676a6c"><span class="num">jp1DF</span></div>
<div class="t" style="left:556px;top:709px;line-height:16px;font-size:14px;color:#676a6c"><span class="num">Api</span></div>
<div class="t" style="left:612px;top:709px;line-height:16px;font-size:14px;color:#676a6c"><span class="num">20000.00</span></div>
<div class="t" style="left:759px;top:709px;line-height:16px;font-size:14px;color:#676a6c"><span class="num">8.00‰</span></div>
<div class="t" style="left:877px;top:709px;line-height:16px;font-size:14px;color:#676a6c"><span class="num">0‰</span></div>
<div class="t" style="left:995px;top:709px;line-height:16px;font-size:14px;color:#676a6c"><span class="num">160.00</span></div>
<div class="t" style="left:1130px;top:709px;line-height:16px;font-size:14px;color:#676a6c"><span class="num">0.00</span></div>
<div class="t" style="left:1248px;top:709px;line-height:16px;font-size:14px;color:#676a6c"><span class="num">19840.00</span></div>
<div class="t" style="left:1366px;top:710px;line-height:16px;font-size:13px;color:#1ab394"><span style="display:inline-block;width:11px;height:11px;border-radius:50%;background:#1ab394;margin-right:4px;vertical-align:-1px"></span>充值成功</div>
<div class="t" style="left:1532px;top:709px;line-height:16px;font-size:14px;color:#676a6c"><span class="num">2021-07-23 13:13:35</span></div>
<div class="t" style="left:1710px;top:709px;line-height:16px;font-size:14px;color:#676a6c"><span class="num">-</span></div>
<div class="abs" style="left:1801px;top:705px;width:50px;height:22px;background:#1ab394;border-radius:3px"></div>
<svg class="abs" style="left:1807px;top:710px" width="12" height="12" viewBox="0 0 12 12"><circle cx="5" cy="5" r="3.6" stroke="#fff" stroke-width="1.9" fill="none"/><path d="M7.6 7.6 L10.8 10.8" stroke="#fff" stroke-width="2.2" stroke-linecap="round"/></svg>
<div class="t" style="left:1821px;top:708px;font-size:12px;line-height:15px;color:#fff;font-weight:bold">查看</div>
<div class="t" style="left:249px;top:753px;line-height:16px;font-size:14px;color:#676a6c"><span class="num">C20210723525699102495</span></div>
<div class="t" style="left:466px;top:753px;line-height:16px;font-size:14px;color:#676a6c"><span class="num">jp1DF</span></div>
<div class="t" style="left:556px;top:753px;line-height:16px;font-size:14px;color:#676a6c"><span class="num">Api</span></div>
<div class="t" style="left:612px;top:753px;line-height:16px;font-size:14px;color:#676a6c"><span class="num">15000.00</span></div>
<div class="t" style="left:759px;top:753px;line-height:16px;font-size:14px;color:#676a6c"><span class="num">8.00‰</span></div>
<div class="t" style="left:877px;top:753px;line-height:16px;font-size:14px;color:#676a6c"><span class="num">0‰</span></div>
<div class="t" style="left:995px;top:753px;line-height:16px;font-size:14px;color:#676a6c"><span class="num">120.00</span></div>
<div class="t" style="left:1130px;top:753px;line-height:16px;font-size:14px;color:#676a6c"><span class="num">0.00</span></div>
<div class="t" style="left:1248px;top:753px;line-height:16px;font-size:14px;color:#676a6c"><span class="num">14880.00</span></div>
<div class="t" style="left:1366px;top:754px;line-height:16px;font-size:13px;color:#1ab394"><span style="display:inline-block;width:11px;height:11px;border-radius:50%;background:#1ab394;margin-right:4px;vertical-align:-1px"></span>充值成功</div>
<div class="t" style="left:1532px;top:753px;line-height:16px;font-size:14px;color:#676a6c"><span class="num">2021-07-23 12:49:24</span></div>
<div class="t" style="left:1710px;top:753px;line-height:16px;font-size:14px;color:#676a6c"><span class="num">-</span></div>
<div class="abs" style="left:1801px;top:749px;width:50px;height:22px;background:#1ab394;border-radius:3px"></div>
<svg class="abs" style="left:1807px;top:754px" width="12" height="12" viewBox="0 0 12 12"><circle cx="5" cy="5" r="3.6" stroke="#fff" stroke-width="1.9" fill="none"/><path d="M7.6 7.6 L10.8 10.8" stroke="#fff" stroke-width="2.2" stroke-linecap="round"/></svg>
<div class="t" style="left:1821px;top:752px;font-size:12px;line-height:15px;color:#fff;font-weight:bold">查看</div>
<div class="t" style="left:241px;top:807px;font-size:13px;line-height:16px;color:#676a6c">显示第 1 到第 100 条记录，总共 385 条记录 每页显示</div>
<div class="abs" style="left:557px;top:797px;width:62px;height:33px;background:#c2c2c2;border-radius:3px"></div>
<div class="t" style="left:570px;top:805px;font-size:14px;line-height:17px;color:#fff">100</div>
<svg class="abs" style="left:598px;top:812px" width="8" height="5"><path d="M0 4.5H8L4 0.5Z" fill="#fff"/></svg>
<div class="t" style="left:623px;top:807px;font-size:13px;line-height:16px;color:#676a6c">条记录</div>
<div class="abs" style="left:1528px;top:797px;width:359px;height:32px;border:1px solid #ddd;border-radius:4px;background:#fff"></div>
<div class="abs" style="left:1643px;top:798px;width:32px;height:30px;background:#f4f4f4"></div>
<div class="abs" style="left:1528px;top:798px;width:51px;height:30px;text-align:center;line-height:30px;font-size:13px;color:#676a6c;white-space:nowrap">首页</div>
<div class="abs" style="left:1579px;top:798px;width:1px;height:30px;background:#ddd"></div>
<div class="abs" style="left:1579px;top:798px;width:64px;height:30px;text-align:center;line-height:30px;font-size:13px;color:#676a6c;white-space:nowrap">上一页</div>
<div class="abs" style="left:1643px;top:798px;width:1px;height:30px;background:#ddd"></div>
<div class="abs" style="left:1643px;top:798px;width:32px;height:30px;text-align:center;line-height:30px;font-size:13px;color:#676a6c;white-space:nowrap">1</div>
<div class="abs" style="left:1675px;top:798px;width:1px;height:30px;background:#ddd"></div>
<div class="abs" style="left:1675px;top:798px;width:32px;height:30px;text-align:center;line-height:30px;font-size:13px;color:#676a6c;white-space:nowrap">2</div>
<div class="abs" style="left:1707px;top:798px;width:1px;height:30px;background:#ddd"></div>
<div class="abs" style="left:1707px;top:798px;width:32px;height:30px;text-align:center;line-height:30px;font-size:13px;color:#676a6c;white-space:nowrap">3</div>
<div class="abs" style="left:1739px;top:798px;width:1px;height:30px;background:#ddd"></div>
<div class="abs" style="left:1739px;top:798px;width:32px;height:30px;text-align:center;line-height:30px;font-size:13px;color:#676a6c;white-space:nowrap">4</div>
<div class="abs" style="left:1771px;top:798px;width:1px;height:30px;background:#ddd"></div>
<div class="abs" style="left:1771px;top:798px;width:64px;height:30px;text-align:center;line-height:30px;font-size:13px;color:#676a6c;white-space:nowrap">下一页</div>
<div class="abs" style="left:1835px;top:798px;width:1px;height:30px;background:#ddd"></div>
<div class="abs" style="left:1835px;top:798px;width:52px;height:30px;text-align:center;line-height:30px;font-size:13px;color:#676a6c;white-space:nowrap">尾页</div>
<div class="abs" style="left:220px;top:886px;width:1694px;height:36px;background:#fff;border-top:1px solid #e7eaec"></div>
<div class="abs" style="left:1908px;top:103px;width:12px;height:776px;background:#9a9a9d"></div>
<div class="abs" style="left:1914px;top:0;width:6px;height:904px;background:#9a9a9d"></div>
</body></html>
